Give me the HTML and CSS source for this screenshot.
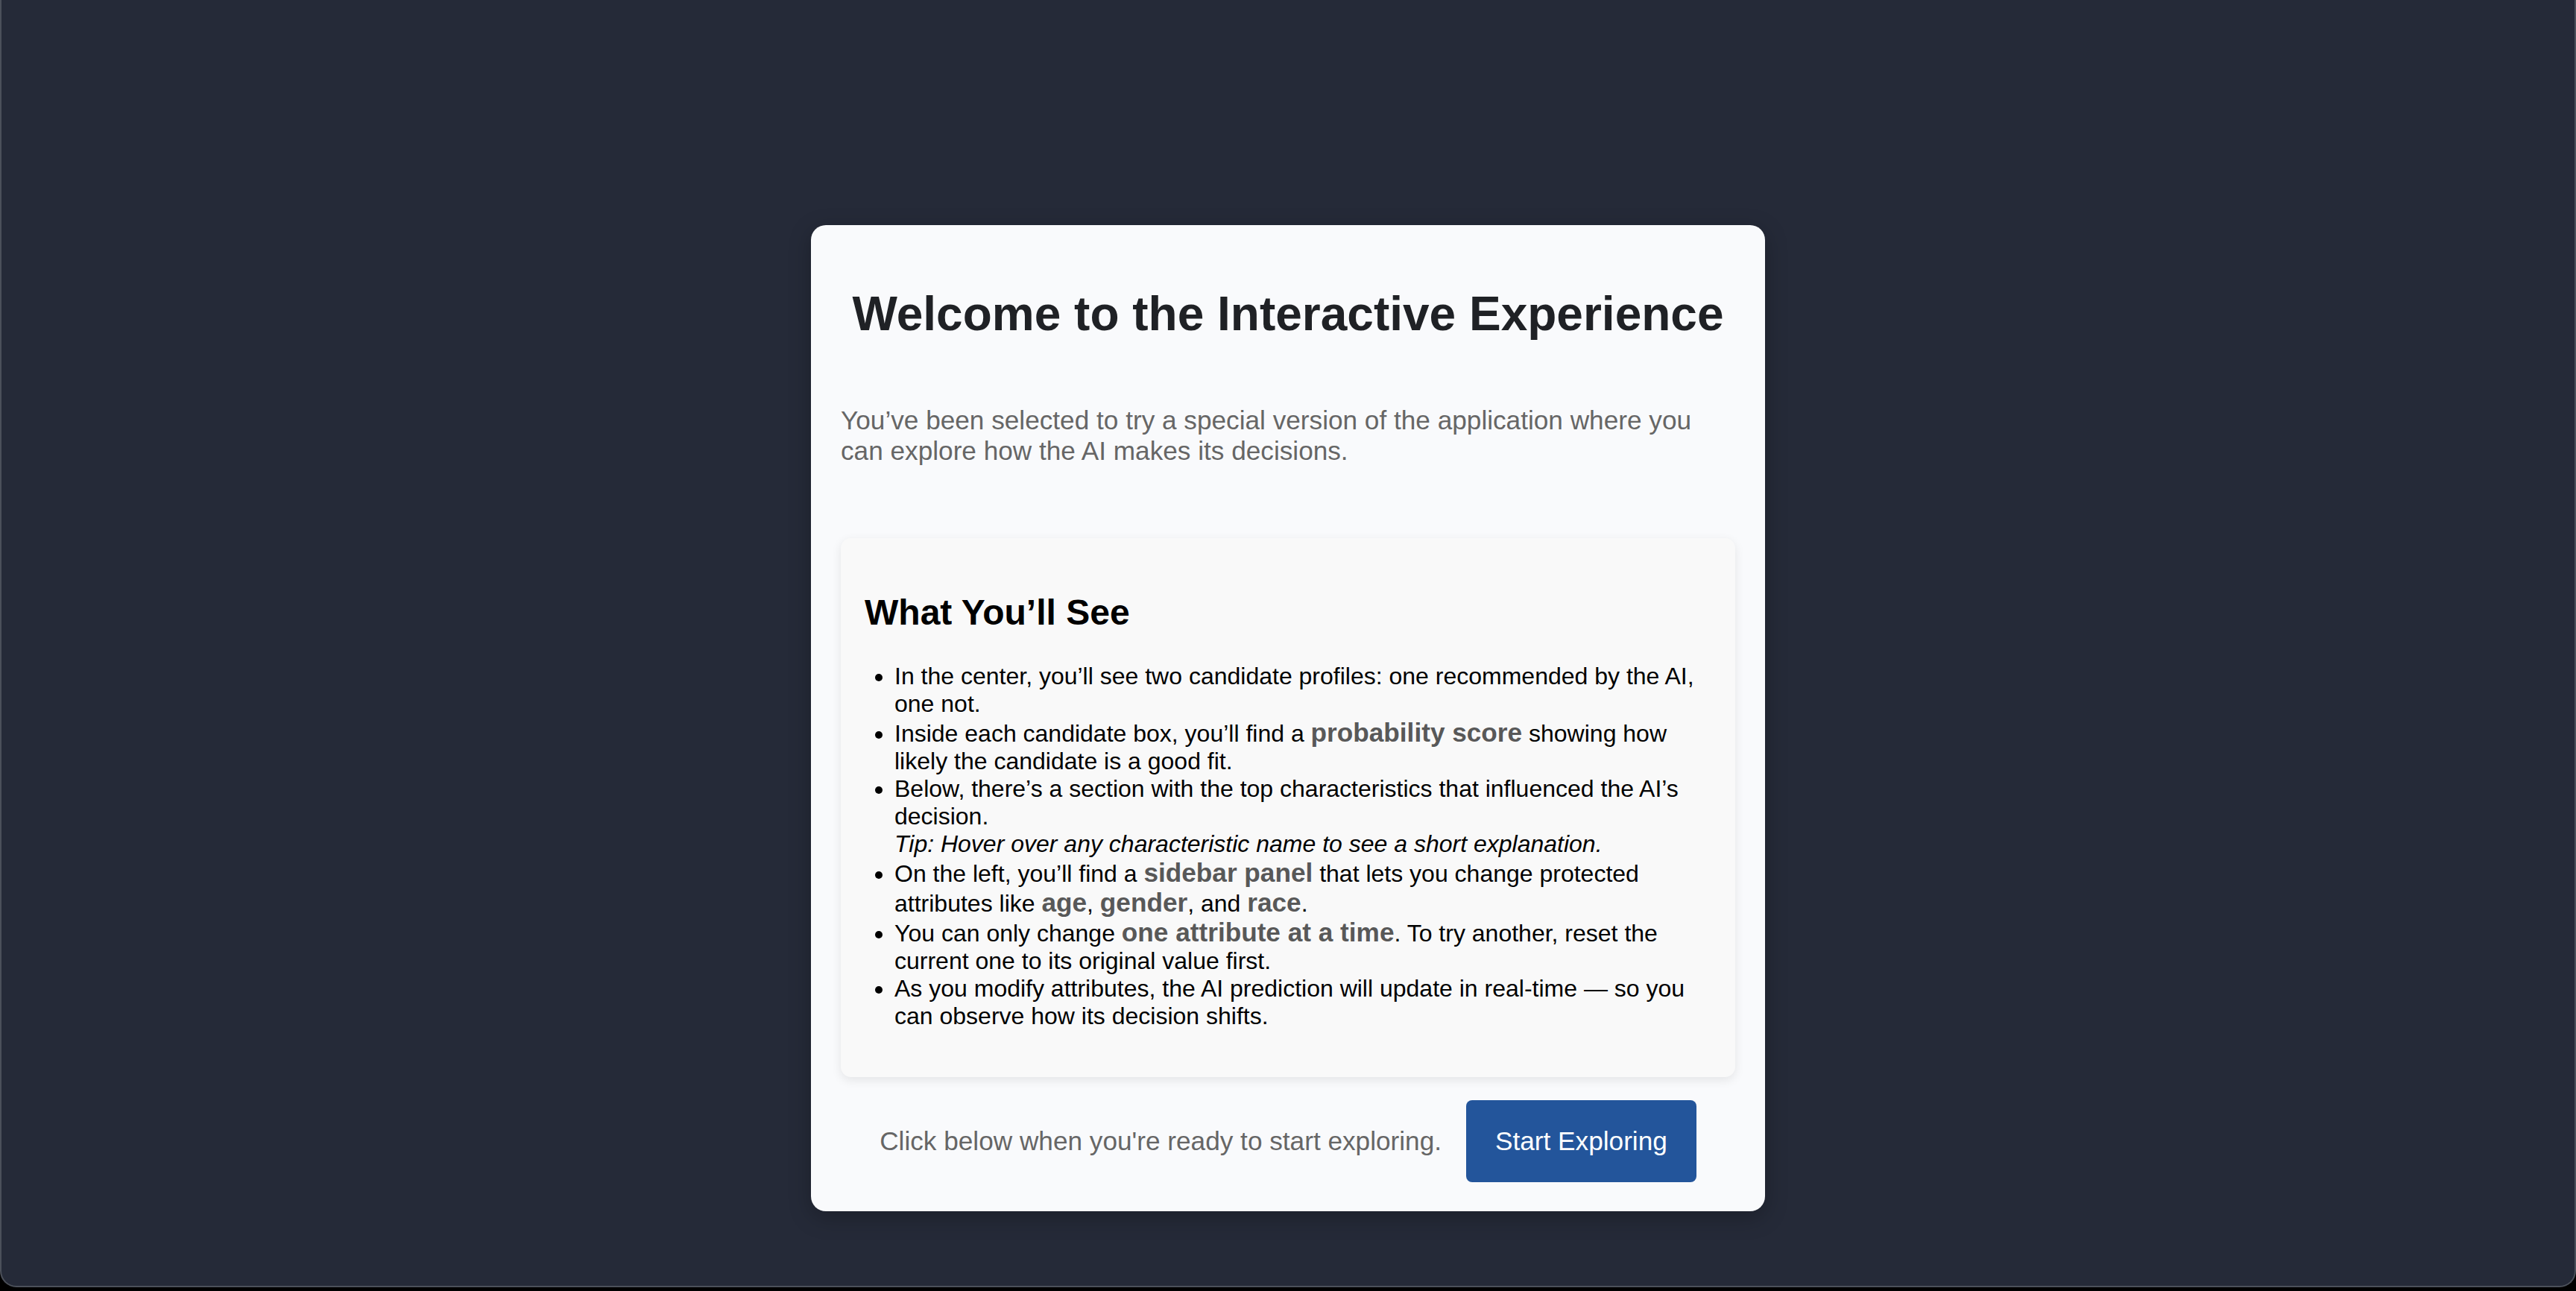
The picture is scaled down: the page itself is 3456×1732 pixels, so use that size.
FILE: index.html
```html
<!DOCTYPE html>
<html lang="en">
<head>
<meta charset="utf-8">
<title>Welcome to the Interactive Experience</title>
<link rel="stylesheet" href="styles.css">
</head>
<body>
<div class="window">
  <div class="modal">
    <h1 class="title">Welcome to the Interactive Experience</h1>
    <p class="intro">You’ve been selected to try a special version of the application where you can explore how the AI makes its decisions.</p>
    <div class="card">
      <h2 class="card-title">What You’ll See</h2>
      <ul class="list">
        <li>In the center, you’ll see two candidate profiles: one recommended by the AI, one not.</li>
        <li>Inside each candidate box, you’ll find a <strong class="hl">probability score</strong> showing how likely the candidate is a good fit.</li>
        <li>Below, there’s a section with the top characteristics that influenced the AI’s decision.<br><em>Tip: Hover over any characteristic name to see a short explanation.</em></li>
        <li>On the left, you’ll find a <strong class="hl">sidebar panel</strong> that lets you change protected attributes like <strong class="hl">age</strong>, <strong class="hl">gender</strong>, and <strong class="hl">race</strong>.</li>
        <li>You can only change <strong class="hl">one attribute at a time</strong>. To try another, reset the current one to its original value first.</li>
        <li>As you modify attributes, the AI prediction will update in real-time — so you can observe how its decision shifts.</li>
      </ul>
    </div>
    <div class="footer">
      <p class="footer-text">Click below when you're ready to start exploring.</p>
      <button class="start-btn" type="button">Start Exploring</button>
    </div>
  </div>
</div>
</body>
</html>
```

FILE: styles.css
```css
html, body {
  margin: 0;
  padding: 0;
}

body {
  background: #000;
  font-family: "Liberation Sans", Arial, Helvetica, sans-serif;
  height: 1732px;
  overflow: hidden;
}

.window {
  box-sizing: border-box;
  height: 1727px;
  background: #252a38;
  border-left: 2px solid #4b505a;
  border-right: 2px solid #4b505a;
  border-bottom: 2px solid #4b505a;
  border-radius: 0 0 22px 22px;
  padding-top: 302px;
  display: flex;
  flex-direction: column;
  align-items: center;
}

.modal {
  box-sizing: border-box;
  width: 1280px;
  background: #f9fafc;
  border-radius: 20px;
  padding: 40px 40px 39px;
  box-shadow: 0 8px 30px rgba(0, 0, 0, 0.25);
}

.title {
  margin: 42px 0 85px;
  font-size: 64px;
  line-height: 74px;
  font-weight: 700;
  color: #1f2125;
  text-align: center;
}

.intro {
  margin: 0 0 97px;
  font-size: 35.2px;
  line-height: 41px;
  color: #666;
}

.card {
  background: #f9f9f9;
  border-radius: 14px;
  padding: 32px 32px 32px;
  box-shadow: 0 4px 14px rgba(0, 0, 0, 0.09);
}

.card-title {
  margin: 40px 0 40px;
  font-size: 48px;
  line-height: 55px;
  font-weight: 700;
  color: #000;
}

.list {
  margin: 0 0 31px;
  padding-left: 40px;
  font-size: 32px;
  color: #000;
}

.list li {
  line-height: normal;
}

.hl {
  font-size: 35.2px;
  font-weight: 700;
  color: #585858;
}

.footer {
  margin-top: 31px;
  display: flex;
  justify-content: center;
  align-items: center;
  gap: 33px;
}

.footer-text {
  margin: 0;
  font-size: 35.2px;
  color: #666;
}

.start-btn {
  font-family: inherit;
  font-size: 35.2px;
  line-height: 40px;
  color: #fff;
  background: #23559b;
  border: none;
  border-radius: 8px;
  padding: 35px 39px;
  cursor: pointer;
}
```
